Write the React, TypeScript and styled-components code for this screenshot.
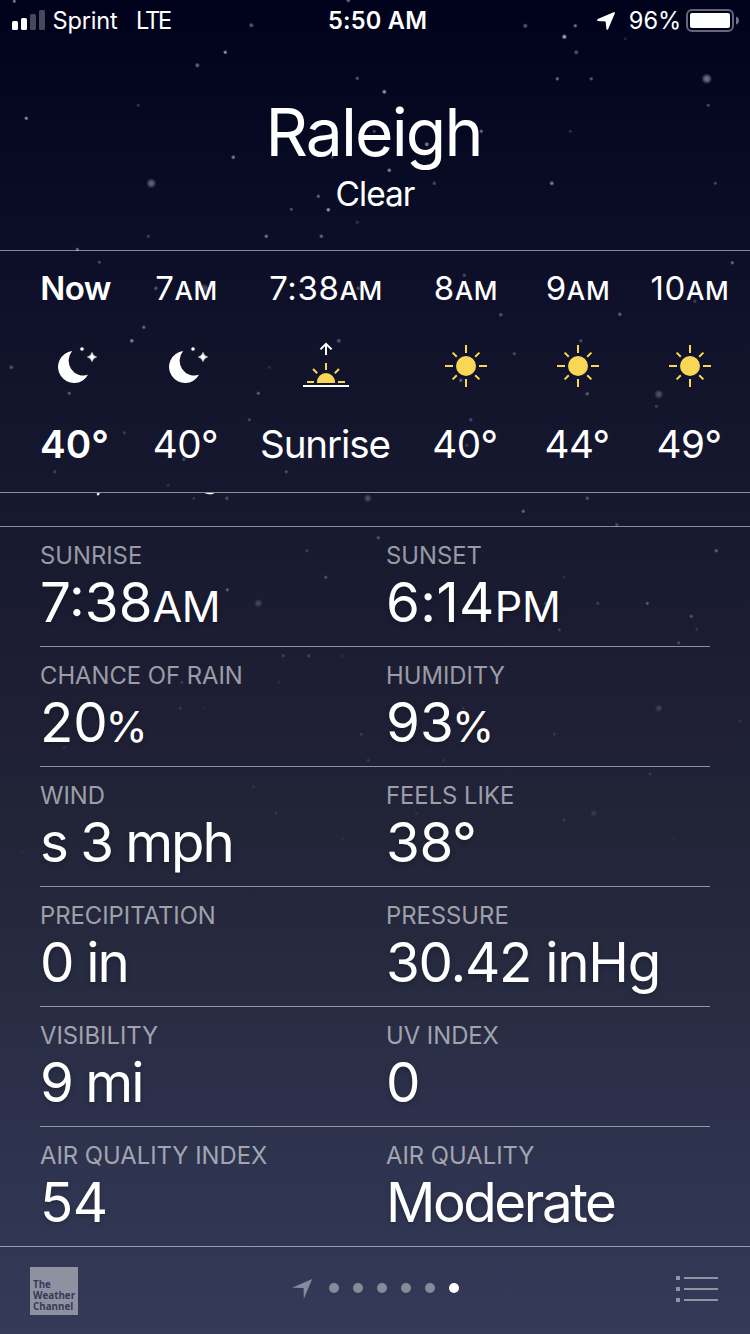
import React from 'react';
import styled, { createGlobalStyle } from 'styled-components';

const GlobalStyle = createGlobalStyle`
  *, *::before, *::after { box-sizing: border-box; }
  body {
    margin: 0;
    background: #353b58;
  }
`;

const hairline = '1px solid rgba(255, 255, 255, 0.5)';

const Screen = styled.div`
  position: relative;
  display: flex;
  flex-direction: column;
  width: 750px;
  height: 1334px;
  overflow: hidden;
  color: #fff;
  font-family: Inter, 'Liberation Sans', sans-serif;
  background: linear-gradient(
    180deg,
    #00011a 0px,
    #04061f 80px,
    #0a0d26 220px,
    #11142b 380px,
    #17192f 520px,
    #1d1e34 680px,
    #222438 830px,
    #282c42 1000px,
    #2c304b 1110px,
    #303652 1220px,
    #343a57 1334px
  );
`;

const Sky = styled.svg`
  position: absolute;
  inset: 0;
  pointer-events: none;
`;

/* Status bar */

const StatusBar = styled.div`
  position: relative;
  display: grid;
  grid-template-columns: 316px auto 1fr;
  height: 40px;
  padding: 6px 11px 0 12px;
  font-size: 23.6px;
  line-height: 29px;
  white-space: nowrap;
`;

const StatusGroup = styled.div<{ $end?: boolean }>`
  display: flex;
  align-items: flex-start;
  justify-content: ${(p) => (p.$end ? 'flex-end' : 'flex-start')};
`;

const Signal = styled.svg`
  margin: 4px 6.5px 0 0;
`;

const Carrier = styled.span`
  letter-spacing: -0.2px;
  margin-right: 18.5px;
`;

const Network = styled.span`
  letter-spacing: -2.2px;
`;

const Clock = styled.span`
  font-weight: 600;
  letter-spacing: 0.22px;
`;

const LocationIcon = styled.svg`
  margin: 6px 14px 0 0;
`;

const Percent = styled.span`
  letter-spacing: -0.1px;
  margin-right: 5px;
`;

const Battery = styled.svg`
  margin-top: 3px;
`;

/* City header */

const Header = styled.header`
  position: relative;
  display: flex;
  flex-direction: column;
  align-items: center;
  height: 210px;
  padding-top: 52px;
`;

const City = styled.h1`
  margin: 0 0 2px;
  padding-right: 3px;
  font-size: 66px;
  font-weight: 400;
  line-height: 80px;
  letter-spacing: -1.85px;
`;

const Condition = styled.p`
  margin: 0;
  font-size: 33.5px;
  line-height: 40px;
  letter-spacing: -1px;
`;

/* Hourly forecast */

const Hourly = styled.section`
  position: relative;
  display: flex;
  height: 243px;
  padding: 17px 0 0 20px;
  border-top: ${hairline};
  border-bottom: ${hairline};
`;

const HourCell = styled.div<{ $width: number; $bold?: boolean }>`
  flex: 0 0 ${(p) => p.$width}px;
  display: flex;
  flex-direction: column;
  align-items: center;
  font-weight: ${(p) => (p.$bold ? 600 : 400)};
  white-space: nowrap;
`;

const HourTime = styled.div<{ $word?: boolean }>`
  font-size: 33px;
  line-height: 40px;
  letter-spacing: ${(p) => (p.$word ? '-0.6px' : '0.6px')};
`;

const HourSuffix = styled.span`
  font-size: 26px;
  font-weight: 450;
  line-height: 0;
`;

const HourIcon = styled.svg`
  display: block;
  margin: 28px 0 24px;
`;

const HourTemp = styled.div<{ $spacing: number }>`
  padding-right: 2px;
  font-size: 38.6px;
  line-height: 48px;
  letter-spacing: ${(p) => p.$spacing}px;
`;

/* Day summary, scrolled mostly under the hourly strip */

const Summary = styled.section`
  position: relative;
  display: flex;
  align-items: flex-end;
  height: 33px;
  padding: 0 40px 29px 95px;
  overflow: hidden;
  font-size: 30px;
  line-height: 36px;
`;

const SummaryTail = styled.span`
  margin: 0 0 1px 97px;
  font-size: 29px;
`;

/* Detail grid */

const Details = styled.section`
  position: relative;
  flex: 1;
  padding: 0 40px;
  border-top: ${hairline};
`;

const DetailRow = styled.div`
  display: grid;
  grid-template-columns: 346px 1fr;
  height: 120px;
  padding-top: 14px;
  border-bottom: ${hairline};
  white-space: nowrap;

  &:last-child {
    height: 119px;
    border-bottom: 0;
  }
`;

const DetailLabel = styled.div`
  font-size: 23.8px;
  line-height: 29px;
  letter-spacing: 0;
  color: rgba(255, 255, 255, 0.56);
`;

const DetailValue = styled.div<{ $spacing?: number }>`
  margin-top: -1px;
  font-size: 54.7px;
  line-height: 66px;
  letter-spacing: ${(p) => p.$spacing ?? 0}px;
  text-shadow: 0 2px 5px rgba(0, 0, 0, 0.25);
`;

const Unit = styled.span<{ $percent?: boolean }>`
  margin-left: ${(p) => (p.$percent ? '-2px' : '0')};
  font-size: 43px;
  font-weight: 420;
  line-height: 0;
  letter-spacing: -0.4px;
`;

/* Footer */

const Footer = styled.footer`
  position: relative;
  display: flex;
  align-items: flex-start;
  height: 88px;
  padding: 20px 32px 0 30px;
  border-top: ${hairline};
`;

const ChannelLogo = styled.div`
  width: 48px;
  height: 48px;
  padding: 11px 0 0 3px;
  background: #8f91a1;
  color: #343a57;
  font: 700 11px/11px 'Open Sans', 'Noto Sans', sans-serif;
  white-space: nowrap;
`;

const ChannelLine = styled.div`
  transform: scaleX(0.89);
  transform-origin: left;
`;

const Pager = styled.nav`
  display: flex;
  align-items: center;
  gap: 14px;
  margin: 10px 0 0 214px;
`;

const PageArrow = styled.svg`
  margin-right: 2px;
`;

const PageDot = styled.span<{ $active?: boolean }>`
  width: 10px;
  height: 10px;
  border-radius: 50%;
  background: ${(p) => (p.$active ? '#fff' : '#878a9b')};
`;

const ListIcon = styled.svg`
  margin: 9px 0 0 auto;
`;

/* x, y, radius, opacity */
const stars: [number, number, number, number][] = [
  [14, 1, 1.5, 0.6], [251, 25, 1.9, 0.4], [225, 52, 1.6, 0.7], [197, 65, 1.9, 0.45], [348, 0, 1.8, 0.5],
  [357, 78, 1.6, 0.4], [138, 105, 1.6, 0.2], [26, 118, 1.6, 0.65], [233, 157, 1.7, 0.55], [151, 183, 3.6, 0.42],
  [318, 196, 1.6, 0.45], [291, 209, 1.5, 0.35], [328, 209.5, 1.7, 0.7], [357, 222, 1.6, 0.2], [148, 236, 1.6, 0.25],
  [266, 236, 1.7, 0.5], [321, 236, 1.7, 0.45], [77, 249, 1.5, 0.5], [332, 157, 1.4, 0.3], [374, 131, 1.5, 0.35],
  [525, 25.5, 1.9, 0.4], [575, 25.5, 1.6, 0.55], [564, 36.5, 2, 0.75], [625, 38.5, 1.6, 0.15], [576, 52, 1.9, 0.38],
  [557, 78.5, 1.6, 0.5], [591, 78.5, 1.6, 0.4], [706.5, 78.5, 3.8, 0.5], [384, 91.5, 1.8, 0.7], [708, 105, 1.5, 0.35],
  [570, 131, 1.5, 0.2], [481, 131, 1.6, 0.5], [426.5, 144, 1.8, 0.6], [389, 170, 1.7, 0.6], [434, 183, 1.7, 0.3],
  [551.5, 183, 1.8, 0.55], [715, 183, 1.5, 0.3], [648, 12, 1.4, 0.6],
  [99, 262, 1.6, 0.3], [155.5, 288, 1.7, 0.35], [204, 288, 3.4, 0.28], [358, 288, 1.7, 0.35], [143.5, 327, 1.6, 0.45],
  [131.5, 340.5, 1.7, 0.6], [338.5, 340.5, 1.8, 0.35], [11, 367, 1.8, 0.33], [269, 367, 1.5, 0.15], [69, 393, 1.6, 0.38],
  [258, 393, 1.6, 0.4], [249, 419.5, 1.5, 0.3], [124, 432.5, 1.6, 0.2], [183.5, 459, 1.6, 0.3], [54.5, 471.5, 1.6, 0.25],
  [286, 471.5, 1.6, 0.28], [168, 485, 1.5, 0.15], [193.5, 498, 1.4, 0.2], [226.5, 498, 1.7, 0.3], [367.5, 498, 3, 0.28],
  [464, 275, 1.6, 0.3], [732, 262.5, 1.6, 0.45], [694.5, 301, 1.6, 0.25], [500.5, 314.5, 1.7, 0.35], [619.5, 314, 1.7, 0.4],
  [580.5, 340.5, 1.6, 0.3], [514, 353.5, 1.5, 0.33], [460.5, 380, 1.7, 0.4], [658.5, 394, 3.3, 0.3], [587, 393.5, 1.7, 0.38],
  [656, 406, 1.5, 0.25], [470.5, 419.5, 1.6, 0.3], [466.5, 445, 1.6, 0.2], [587, 498, 1.7, 0.3], [523, 511, 1.6, 0.4],
  [616.5, 524.5, 1.6, 0.28], [378, 537.5, 1.5, 0.35], [716, 550.5, 1.6, 0.4], [306.5, 550.5, 1.6, 0.2],
  [325.5, 577, 1.6, 0.3], [227, 589.5, 1.5, 0.4], [258, 603, 3, 0.22], [563.5, 577, 1.4, 0.12], [597.5, 603, 1.5, 0.2],
  [647, 603, 1.5, 0.35], [545, 603, 1.4, 0.2], [691, 616, 1.6, 0.3], [696.5, 629, 1.4, 0.15], [559, 629.5, 1.5, 0.2],
  [678.5, 642.5, 1.5, 0.25], [283, 655.5, 1.5, 0.2], [308.5, 655.5, 1.6, 0.22], [342, 655.5, 1.3, 0.1], [279, 682, 1.4, 0.1],
  [181.5, 682, 1.4, 0.18], [180, 708, 1.4, 0.16], [203, 708, 1.3, 0.07], [361, 734, 1.4, 0.18], [64, 747, 1.4, 0.1],
  [368, 760, 1.4, 0.15], [658.5, 708, 2.8, 0.18], [463, 708, 1.4, 0.14], [740, 721, 1.4, 0.1], [554, 734, 1.4, 0.14],
  [443, 760, 1.4, 0.1], [649.5, 773.5, 1.4, 0.14], [253, 786.5, 1.4, 0.1], [276, 813, 1.4, 0.13], [416, 813, 1.4, 0.1],
  [593.5, 813, 2.6, 0.12], [564, 820, 1.4, 0.14], [343, 839, 1.3, 0.06], [22, 852, 1.3, 0.06], [672, 839, 1.3, 0.06],
];

const StarField = () => (
  <Sky width="750" height="1334" viewBox="0 0 750 1334" aria-hidden="true">
    <defs>
      <radialGradient id="glow">
        <stop offset="0" stopColor="#e4e8f5" stopOpacity="1" />
        <stop offset="0.45" stopColor="#d5daec" stopOpacity="0.8" />
        <stop offset="1" stopColor="#b8c0dc" stopOpacity="0" />
      </radialGradient>
    </defs>
    {stars.map(([x, y, r, o]) => (
      <circle key={`${x}-${y}`} cx={x + 0.3} cy={y + 0.3} r={r * 1.45} fill="url(#glow)" opacity={o} />
    ))}
  </Sky>
);

const MoonIcon = () => (
  <HourIcon width="45" height="60" viewBox="0 0 45 60" fill="#fff">
    <path d="M19.2 15.1A16 16 0 1 0 35 38.8A14.8 14.8 0 0 1 19.2 15.1Z" />
    <circle cx="29" cy="13" r="1.8" />
    <path d="M39 16.4Q39.9 20.1 43.6 21Q39.9 21.9 39 25.6Q38.1 21.9 34.4 21Q38.1 20.1 39 16.4Z" stroke="#fff" strokeWidth="0.6" />
  </HourIcon>
);

const SunIcon = () => (
  <HourIcon width="44" height="60" viewBox="0 0 44 60" stroke="#f7d755" strokeWidth="2">
    <circle cx="22" cy="30" r="10" fill="#f7d755" stroke="none" />
    <path d="M22 9V17M22 43V51M1 30H9M35 30H43M8.6 16.6L12.8 20.8M31.2 39.2L35.4 43.4M35.4 16.6L31.2 20.8M12.8 39.2L8.6 43.4" />
  </HourIcon>
);

const SunriseIcon = () => (
  <HourIcon width="48" height="60" viewBox="0 0 48 60" fill="none" strokeWidth="2">
    <path d="M24 19V8.2M18.4 13.4L24 7.8L29.6 13.4" stroke="#fff" />
    <path d="M24 27V34M11 33L15.2 37.2M37 33L32.8 37.2M5 46H12M36 46H43" stroke="#f7d755" />
    <path d="M15 47V46A9 9 0 0 1 33 46V47Z" fill="#f7d755" />
    <path d="M1 50H47" stroke="#fff" />
  </HourIcon>
);

type Hour = {
  time: string;
  suffix?: string;
  icon: 'moon' | 'sun' | 'sunrise';
  temp: string;
  width: number;
  spacing: number;
};

const hours: Hour[] = [
  { time: 'Now', icon: 'moon', temp: '40°', width: 111, spacing: 0 },
  { time: '7', suffix: 'AM', icon: 'moon', temp: '40°', width: 111, spacing: -0.5 },
  { time: '7:38', suffix: 'AM', icon: 'sunrise', temp: 'Sunrise', width: 168, spacing: -1.1 },
  { time: '8', suffix: 'AM', icon: 'sun', temp: '40°', width: 112, spacing: -0.5 },
  { time: '9', suffix: 'AM', icon: 'sun', temp: '44°', width: 112, spacing: -0.6 },
  { time: '10', suffix: 'AM', icon: 'sun', temp: '49°', width: 112, spacing: -0.5 },
];

const icons = { moon: MoonIcon, sun: SunIcon, sunrise: SunriseIcon };

type Detail = { label: string; value: React.ReactNode; spacing?: number };

const details: [Detail, Detail][] = [
  [
    { label: 'SUNRISE', value: <>7:38<Unit>AM</Unit></> },
    { label: 'SUNSET', value: <>6:14<Unit>PM</Unit></>, spacing: 0.4 },
  ],
  [
    { label: 'CHANCE OF RAIN', value: <>20<Unit $percent>%</Unit></>, spacing: -0.2 },
    { label: 'HUMIDITY', value: <>93<Unit $percent>%</Unit></>, spacing: 0.2 },
  ],
  [
    { label: 'WIND', value: 's 3 mph', spacing: -2.05 },
    { label: 'FEELS LIKE', value: '38°', spacing: -0.4 },
  ],
  [
    { label: 'PRECIPITATION', value: '0 in', spacing: -1.85 },
    { label: 'PRESSURE', value: '30.42 inHg', spacing: -1.25 },
  ],
  [
    { label: 'VISIBILITY', value: '9 mi', spacing: -2 },
    { label: 'UV INDEX', value: '0' },
  ],
  [
    { label: 'AIR QUALITY INDEX', value: '54', spacing: -0.5 },
    { label: 'AIR QUALITY', value: 'Moderate', spacing: -2.45 },
  ],
];

export default function App() {
  return (
    <>
      <GlobalStyle />
      <Screen>
        <StarField />

        <StatusBar>
          <StatusGroup>
            <Signal width="34" height="20" viewBox="0 0 34 20" fill="#fff">
              <rect x="0" y="11" width="6" height="9" rx="1.6" />
              <rect x="9" y="8" width="6" height="12" rx="1.6" />
              <rect x="18" y="4" width="6" height="16" rx="1.6" opacity="0.28" />
              <rect x="27" y="0" width="6" height="20" rx="1.6" opacity="0.28" />
            </Signal>
            <Carrier>Sprint</Carrier>
            <Network>LTE</Network>
          </StatusGroup>
          <Clock>5:50 AM</Clock>
          <StatusGroup $end>
            <LocationIcon width="18" height="18" viewBox="0 0 18 18" fill="#fff">
              <path d="M16.6 .2L.8 7Q-.6 8 .8 8.9L8.6 9.4L9.4 17Q10 18.6 11.1 17.2L17.8 1.4Q18.2-.2 16.6 .2Z" />
            </LocationIcon>
            <Percent>96%</Percent>
            <Battery width="53" height="24" viewBox="0 0 53 24">
              <rect x="1" y="1" width="46" height="21" rx="5" fill="none" stroke="#fff" strokeOpacity="0.4" strokeWidth="2" />
              <rect x="4" y="4" width="40" height="15" rx="2" fill="#fff" />
              <path d="M50 7.5Q53 8.5 53 11.5Q53 14.5 50 15.5Z" fill="#fff" opacity="0.45" />
            </Battery>
          </StatusGroup>
        </StatusBar>

        <Header>
          <City>Raleigh</City>
          <Condition>Clear</Condition>
        </Header>

        <Hourly>
          {hours.map((h, i) => {
            const Icon = icons[h.icon];
            return (
              <HourCell key={h.time} $width={h.width} $bold={i === 0}>
                <HourTime $word={!h.suffix}>
                  {h.time}
                  {h.suffix && <HourSuffix>{h.suffix}</HourSuffix>}
                </HourTime>
                <Icon />
                <HourTemp $spacing={h.spacing}>{h.temp}</HourTemp>
              </HourCell>
            );
          })}
        </Hourly>

        <Summary>
          <span>,</span>
          <SummaryTail>g</SummaryTail>
        </Summary>

        <Details>
          {details.map((row) => (
            <DetailRow key={row[0].label}>
              {row.map((d) => (
                <div key={d.label}>
                  <DetailLabel>{d.label}</DetailLabel>
                  <DetailValue $spacing={d.spacing}>{d.value}</DetailValue>
                </div>
              ))}
            </DetailRow>
          ))}
        </Details>

        <Footer>
          <ChannelLogo>
            <ChannelLine>The</ChannelLine>
            <ChannelLine>Weather</ChannelLine>
            <ChannelLine>Channel</ChannelLine>
          </ChannelLogo>
          <Pager>
            <PageArrow width="21" height="22" viewBox="0 0 21 22" fill="#878a9b">
              <path d="M20.2 2L0 10.7L11.6 11L11.8 22Z" />
            </PageArrow>
            <PageDot />
            <PageDot />
            <PageDot />
            <PageDot />
            <PageDot />
            <PageDot $active />
          </Pager>
          <ListIcon width="42" height="26" viewBox="0 0 42 26" fill="#9294a4" shapeRendering="crispEdges">
            <path d="M0 0H4V4H0ZM0 11H4V15H0ZM0 22H4V26H0ZM8 1H42V3H8ZM8 12H42V14H8ZM8 23H42V25H8Z" />
          </ListIcon>
        </Footer>
      </Screen>
    </>
  );
}
